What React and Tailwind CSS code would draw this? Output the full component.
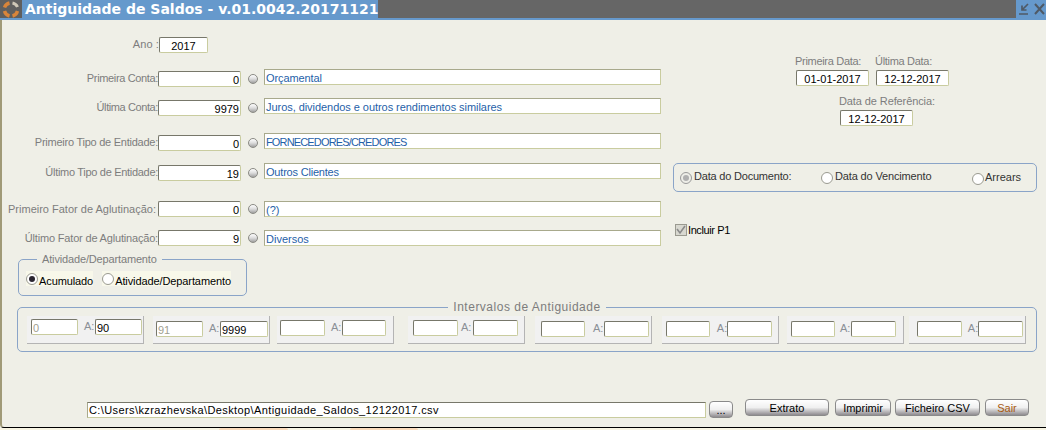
const FONT = "font-['Liberation_Sans',Arial,sans-serif]"

const inputBox =
  "h-[16px] bg-white rounded-[2px] border border-t-[#77776a] border-l-[#77776a] border-r-[#c9cc9f] border-b-[#c9cc9f] text-[11px] leading-[16px]"

const textField =
  "w-[397px] h-[16px] ml-[6px] bg-white border border-t-[#a8a98c] border-l-[#a8a98c] border-r-[#c9cc9f] border-b-[#c9cc9f] pl-[1px] text-[11px] leading-[16px] whitespace-nowrap text-[#1f5fa8]"

const rows = [
  { label: "Primeira Conta:", value: "0", text: "Orçamental", mt: "mt-[16px]", labelTrack: "tracking-[-0.35px]", textTrack: "tracking-[-0.1px]" },
  { label: "Última Conta:", value: "9979", text: "Juros, dividendos e outros rendimentos similares", mt: "mt-[11px]", labelTrack: "tracking-[-0.4px]", textTrack: "tracking-[-0.05px]" },
  { label: "Primeiro Tipo de Entidade:", value: "0", text: "FORNECEDORES/CREDORES", mt: "mt-[17px]", labelTrack: "tracking-[-0.25px]", textTrack: "tracking-[-0.85px]" },
  { label: "Último Tipo de Entidade:", value: "19", text: "Outros Clientes", mt: "mt-[12px]", labelTrack: "tracking-[-0.3px]", textTrack: "tracking-[-0.2px]" },
  { label: "Primeiro Fator de Aglutinação:", value: "0", text: "(?)", mt: "mt-[20px]", labelTrack: "pr-[2px]", flat: true },
  { label: "Último Fator de Aglutinação:", value: "9", text: "Diversos", mt: "mt-[13px]", labelTrack: "tracking-[-0.18px]", flat: true },
]

const cells = [
  { box: "ml-[9px] pl-[4px] pr-[1px]", a: "w-[47px]", lab: "ml-[6px]", b: "w-[47px]", from: "0", to: "90", top: "pt-[3px]" },
  { box: "ml-[9px] pl-[3px] pr-[1px]", a: "w-[47px]", lab: "ml-[6px]", b: "w-[48px]", from: "91", to: "9999", top: "pt-[5px]" },
  { box: "ml-[7px] pl-[3px] pr-[7px]", a: "w-[45px]", lab: "ml-[6px]", b: "w-[44px]", top: "pt-[4px]" },
  { box: "ml-[14px] pl-[5px] pr-[6px]", a: "w-[45px]", lab: "ml-[3px]", b: "w-[45px]", top: "pt-[4px]" },
  { box: "ml-[10px] pl-[6px] pr-[2px]", a: "w-[44px]", lab: "ml-[8px]", b: "w-[45px]", top: "pt-[5px]" },
  { box: "ml-[10px] pl-[4px] pr-[6px]", a: "w-[44px]", lab: "ml-[7px]", b: "w-[45px]", top: "pt-[5px]" },
  { box: "ml-[8px] pl-[4px] pr-[7px]", a: "w-[44px]", lab: "ml-[5px]", b: "w-[45px]", top: "pt-[5px]" },
  { box: "ml-[5px] pl-[8px] pr-[2px]", a: "w-[45px]", lab: "ml-[6px]", b: "w-[45px]", top: "pt-[5px]" },
]

const Knob = ({ flat }) => (
  <span
    className={`ml-[7px] w-[10px] h-[10px] shrink-0 rounded-full border border-[#8a8a84] bg-gradient-to-b from-white via-[#dcdcdc] to-[#a0a0a0] ${
      flat ? "mt-[3px]" : "mt-[5px]"
    }`}
  ></span>
)

const Radio = ({ checked, muted }) => (
  <span
    className={`w-[12px] h-[12px] shrink-0 rounded-full flex items-center justify-center ${
      muted ? "border border-[#9a9a9a] bg-[#eeeee8]" : "border border-[#9a9a90] bg-white"
    }`}
  >
    {checked && <span className={`w-[6px] h-[6px] rounded-full ${muted ? "bg-[#b0b0b0]" : "bg-[#2a2530]"}`}></span>}
  </span>
)

const FormRow = ({ row }) => (
  <div className={`flex ${row.mt}`}>
    <div className={`w-[156px] text-right text-[11px] leading-[16px] whitespace-nowrap text-[#7d7d7d] ${row.labelTrack} ${row.flat ? "" : "mt-[1px]"}`}>
      {row.label}
    </div>
    <div className={`${inputBox} w-[83px] pr-[1px] text-right text-black ${row.flat ? "" : "mt-[2px]"}`}>{row.value}</div>
    <Knob flat={row.flat} />
    <div className={`${textField} ${row.textTrack || ""}`}>{row.text}</div>
  </div>
)

const DateField = ({ label, value, track, className }) => (
  <div className={`w-[73px] ${className || ""}`}>
    <div className={`text-[11px] leading-[13px] whitespace-nowrap text-[#7d7d7d] ${track}`}>{label}</div>
    <div className={`${inputBox} mt-[2px] text-center text-black`}>{value}</div>
  </div>
)

const SmallButton = ({ children, className }) => (
  <button className={`h-[17px] rounded-[4px] border border-[#8a8a8a] bg-gradient-to-b from-white via-[#f0f0f0] to-[#8f8c90] text-[11px] leading-[14px] ${className}`}>
    {children}
  </button>
)

export default function App() {
  return (
    <div className={`${FONT} w-[1046px] h-[430px] flex flex-col bg-[#efefe7] overflow-hidden`}>
      {/* Title bar */}
      <div className="h-[20px] shrink-0 flex bg-[#6699cc]">
        <div className="w-[22px] h-[18px] bg-[#5f5f5f] flex items-center justify-center">
          <svg width="18" height="17" viewBox="0 0 18 17" fill="none">
            <path d="M7.5 2 A7 7 0 0 0 2.5 6.5" stroke="#d9853a" strokeWidth="3.4" />
            <path d="M10.5 2 A7 7 0 0 1 15.5 6" stroke="#cfc8b8" strokeWidth="3" />
            <path d="M2.5 10 A7 7 0 0 0 7.5 15" stroke="#d9853a" strokeWidth="3.4" />
            <path d="M15.5 10 A7 7 0 0 1 10.5 15" stroke="#d9853a" strokeWidth="3.4" />
          </svg>
        </div>
        <div className="w-[356px] pl-[3px] font-['DejaVu_Sans',sans-serif] font-bold text-[14px] leading-[19px] text-white whitespace-nowrap">
          Antiguidade de Saldos - v.01.0042.20171121
        </div>
        <div className="w-[638px] h-[18px] bg-[#666666]"></div>
        <div className="flex-1 flex items-center gap-[4px] pl-[3px] h-[18px]">
          <svg width="11" height="12" viewBox="0 0 11 12" fill="none" stroke="#4f5a66" strokeWidth="1.7">
            <path d="M9 1 L3.5 6.5 M3 2.5 V7 H7.5 M0 11 H9" />
          </svg>
          <svg width="11" height="12" viewBox="0 0 11 12" fill="none" stroke="#4f5a66" strokeWidth="2">
            <path d="M1 1 L10 11 M10 1 L1 11" />
          </svg>
        </div>
      </div>

      {/* Form body */}
      <div className="flex-1 min-h-0 border-l-[2px] border-[#a09a78] rounded-bl-[4px] border-b-[1px] border-b-black pl-[15px] flex flex-col">
        <div className="flex -ml-[15px]">
          <div className="w-[671px] shrink-0">
            <div className="flex mt-[17px] h-[16px]">
              <div className="w-[157px] text-right text-[11px] leading-[15px] tracking-[0.1px] text-[#7d7d7d]">Ano :</div>
              <div className={`${inputBox} w-[49px] text-center text-black`}>2017</div>
            </div>
            {rows.map((row) => (
              <FormRow key={row.label} row={row} />
            ))}
          </div>

          <div className="flex-1 min-w-0">
            <div className="flex mt-[35px] ml-[123px] gap-[7px]">
              <DateField label="Primeira Data:" value="01-01-2017" track="-ml-[1px] tracking-[-0.3px]" />
              <DateField label="Última Data:" value="12-12-2017" track="-ml-[1px] tracking-[-0.3px]" />
            </div>
            <DateField label="Data de Referência:" value="12-12-2017" track="-ml-[1px] tracking-[-0.1px]" className="mt-[9px] ml-[167px]" />
            <div className="mt-[37px] w-[364px] h-[29px] flex items-center pl-[6px] rounded-[5px] border border-[#8aa4c8] text-[11px] whitespace-nowrap text-[#333]">
              <Radio checked muted />
              <span className="ml-[2px] w-[96px] -mt-[2px] tracking-[-0.2px]">Data do Documento:</span>
              <span className="ml-[31px]"><Radio /></span>
              <span className="ml-[2px] w-[97px] -mt-[2px] tracking-[-0.15px]">Data do Vencimento</span>
              <span className="ml-[40px] mt-[2px]"><Radio /></span>
              <span className="ml-[1px]">Arrears</span>
            </div>
            <div className="mt-[30px] ml-[2px] flex items-center text-[11px] tracking-[-0.4px] text-black">
              <span className="w-[12px] h-[12px] border border-[#9a9a90] bg-[#d8d8d0] flex items-center justify-center">
                <svg width="10" height="10" viewBox="0 0 10 10" fill="none" stroke="#8a8a8a" strokeWidth="1.6">
                  <path d="M1 4 L4 8 L9 1" />
                </svg>
              </span>
              <span className="ml-[1px]">Incluir P1</span>
            </div>
          </div>
        </div>

        <fieldset className="mt-[7px] ml-[1px] w-[229px] h-[43px] rounded-[5px] border border-[#8aa4c8] pl-[7px]">
          <legend className="ml-[11px] px-[5px] text-[11px] leading-[13px] tracking-[-0.15px] text-[#7d7d7d]">Atividade/Departamento</legend>
          <div className="flex mt-[5px] text-[11px] leading-[14px] text-black tracking-[-0.1px]">
            <span className="flex items-center h-[15px] bg-[#f8f8ea]">
              <Radio checked />
              <span className="ml-[1px] mt-[4px]">Acumulado</span>
            </span>
            <span className="ml-[9px] flex items-center h-[15px] bg-[#f8f8ea]">
              <Radio />
              <span className="ml-[1px] mt-[4px]">Atividade/Departamento</span>
            </span>
          </div>
        </fieldset>

        <fieldset className="mt-[4px] w-[1020px] h-[52px] rounded-[5px] border border-[#8aa4c8]">
          <legend className="mx-auto px-[5px] text-[12px] leading-[14px] tracking-[0.5px] text-[#7d7d7d]">Intervalos de Antiguidade</legend>
          <div className="flex mt-[2px]">
            {cells.map((c, i) => (
              <div
                key={i}
                className={`flex w-[117px] h-[28px] shrink-0 bg-[#f1f1f1] border-r border-b border-[#b4b4b4] ${c.box} ${c.top}`}
              >
                <div className={`${inputBox} ${c.a} pl-[1px] text-[#a0a090]`}>{c.from}</div>
                <span className={`${c.lab} text-[11px] leading-[14px] text-[#8a8f96]`}>A:</span>
                <div className={`${inputBox} ${c.b} ml-auto pl-[1px] text-black`}>{c.to}</div>
              </div>
            ))}
          </div>
        </fieldset>

        <div className="flex items-start mt-[47px] -ml-[15px]">
          <div className="w-[619px] h-[16px] ml-[85px] mt-[3px] bg-white border border-t-[#77776a] border-l-[#a8a98c] border-r-[#c9cc9f] border-b-[#c9cc9f] pl-[1px] text-[11px] leading-[15px] tracking-[0.4px] text-black whitespace-nowrap">
            {"C:\\Users\\kzrazhevska\\Desktop\\Antiguidade_Saldos_12122017.csv"}
          </div>
          <SmallButton className="w-[24px] ml-[3px] mt-[2px]">...</SmallButton>
          <SmallButton className="w-[84px] ml-[12px]">Extrato</SmallButton>
          <SmallButton className="w-[56px] ml-[6px]">Imprimir</SmallButton>
          <SmallButton className="w-[85px] ml-[4px]">Ficheiro CSV</SmallButton>
          <SmallButton className="w-[44px] ml-[5px] text-[#a85a10]">Sair</SmallButton>
        </div>
      </div>

      {/* Strip of the page below the window */}
      <div className="h-[2px] shrink-0 flex bg-[#f8f5e4]">
        <div className="w-[69px] ml-[219px] bg-[#fbdcbc] rounded-t-[2px]"></div>
        <div className="w-[68px] ml-[62px] bg-[#fbdcbc] rounded-t-[2px]"></div>
      </div>
    </div>
  )
}
